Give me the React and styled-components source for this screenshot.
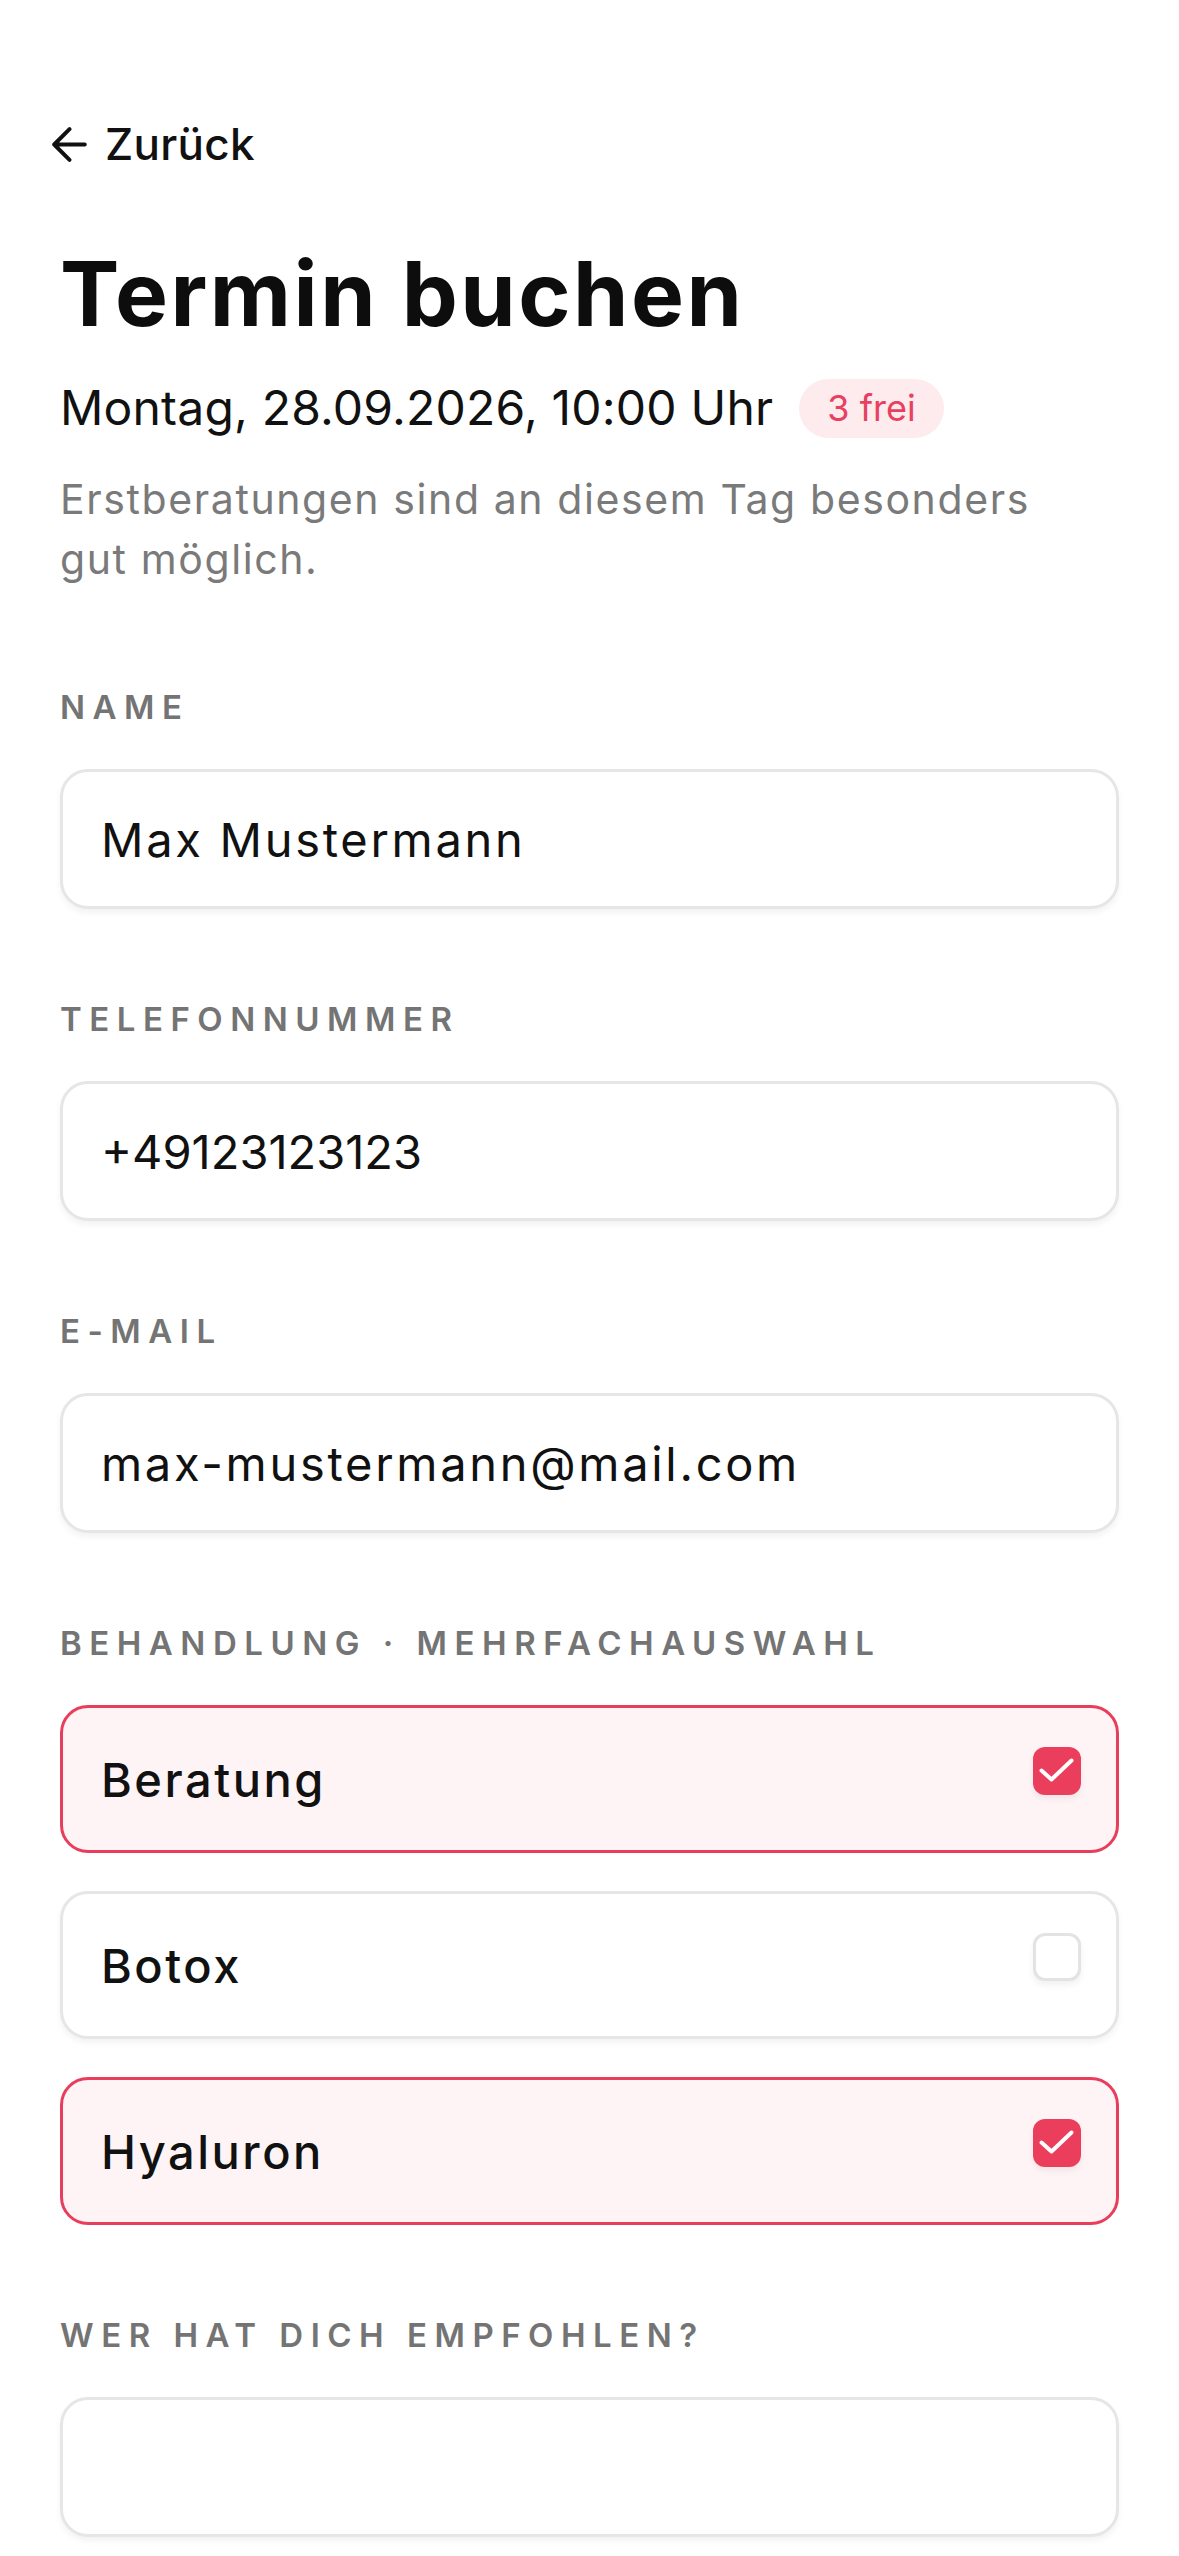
import { useState } from "react";
import styled, { createGlobalStyle } from "styled-components";

const GlobalStyle = createGlobalStyle`
  * {
    box-sizing: border-box;
  }
  body {
    margin: 0;
    background: #ffffff;
    font-family: Inter, "Noto Sans", sans-serif;
    color: #111111;
  }
`;

const treatments = ["Beratung", "Botox", "Hyaluron"];

export default function App() {
  const [selected, setSelected] = useState(["Beratung", "Hyaluron"]);

  function toggle(name) {
    setSelected((prev) =>
      prev.includes(name) ? prev.filter((n) => n !== name) : [...prev, name]
    );
  }

  return (
    <Page>
      <GlobalStyle />
      <BackLink href="#">
        <svg width="35" height="35" viewBox="4 4 16 16" fill="none">
          <path
            d="M12 19 5 12l7-7M19 12H5"
            stroke="#111"
            strokeWidth="1.8"
            strokeLinecap="round"
            strokeLinejoin="round"
          />
        </svg>
        Zurück
      </BackLink>

      <Title>Termin buchen</Title>
      <DateRow>
        <DateText>Montag, 28.09.2026, 10:00 Uhr</DateText>
        <Badge>3 frei</Badge>
      </DateRow>
      <Hint>Erstberatungen sind an diesem Tag besonders gut möglich.</Hint>

      <Form>
        <Field>
          <Label>Name</Label>
          <Input type="text" defaultValue="Max Mustermann" />
        </Field>
        <Field>
          <Label>Telefonnummer</Label>
          <Input type="tel" defaultValue="+49123123123" />
        </Field>
        <Field>
          <Label>E-Mail</Label>
          <Input type="email" defaultValue="max-mustermann@mail.com" />
        </Field>
        <Field>
          <Label>Behandlung · Mehrfachauswahl</Label>
          <Choices>
            {treatments.map((name) => {
              const active = selected.includes(name);
              return (
                <Choice key={name} $active={active} onClick={() => toggle(name)}>
                  <span>{name}</span>
                  <Check $active={active}>
                    {active && (
                      <svg width="48" height="48" viewBox="0 0 48 48" fill="none">
                        <path
                          d="M8.5 23.5 18.5 32.5 38.5 13.5"
                          stroke="#ffffff"
                          strokeWidth="4"
                          strokeLinecap="round"
                          strokeLinejoin="round"
                        />
                      </svg>
                    )}
                  </Check>
                </Choice>
              );
            })}
          </Choices>
        </Field>
        <Field>
          <Label>Wer hat dich empfohlen?</Label>
          <Input type="text" defaultValue="" />
        </Field>
      </Form>
    </Page>
  );
}

const Page = styled.main`
  width: 1179px;
  min-height: 2556px;
  padding: 117px 60px 0 60px;
`;

const BackLink = styled.a`
  display: flex;
  align-items: center;
  gap: 18px;
  height: 54px;
  font-size: 44px;
  line-height: 54px;
  font-weight: 500;
  letter-spacing: 0.3px;
  color: #111111;
  text-decoration: none;
  svg {
    margin-left: -8px;
  }
`;

const Title = styled.h1`
  margin: 74px 0 0 0;
  font-size: 89px;
  line-height: 98px;
  font-weight: 700;
  letter-spacing: 2.5px;
  color: #0d0d0d;
`;

const DateRow = styled.div`
  display: flex;
  align-items: center;
  gap: 26px;
  margin-top: 35px;
  height: 60px;
`;

const DateText = styled.span`
  font-size: 48px;
  line-height: 60px;
  font-weight: 400;
  letter-spacing: 0.2px;
  color: #111111;
`;

const Badge = styled.span`
  display: inline-flex;
  align-items: center;
  height: 59px;
  padding: 0 28px;
  border-radius: 30px;
  background: #fdebee;
  color: #e8405f;
  font-size: 36px;
  font-weight: 400;
`;

const Hint = styled.p`
  max-width: 1020px;
  margin: 31px 0 0 0;
  font-size: 41px;
  line-height: 60px;
  letter-spacing: 1.6px;
  color: #7a7a7a;
`;

const Form = styled.form`
  display: flex;
  flex-direction: column;
  gap: 90px;
  margin-top: 98px;
`;

const Field = styled.div`
  display: flex;
  flex-direction: column;
  gap: 42px;
`;

const Label = styled.label`
  font-size: 33px;
  line-height: 40px;
  font-weight: 600;
  letter-spacing: 7.5px;
  text-transform: uppercase;
  color: #747474;
`;

const Input = styled.input`
  width: 100%;
  height: 140px;
  padding: 0 38px;
  border: 3px solid #e6e6e6;
  border-radius: 28px;
  background: #ffffff;
  box-shadow: 0 4px 6px rgba(0, 0, 0, 0.05);
  font-family: inherit;
  font-size: 47px;
  letter-spacing: 2.7px;
  color: #111111;
  outline: none;
  &[type="tel"] {
    letter-spacing: 0;
    font-variant-numeric: proportional-nums;
  }
`;

const Choices = styled.div`
  display: flex;
  flex-direction: column;
  gap: 38px;
`;

const Choice = styled.div`
  display: flex;
  align-items: center;
  justify-content: space-between;
  height: 148px;
  padding: 0 35px 0 38px;
  border: 3px solid ${(p) => (p.$active ? "#e93d5c" : "#e6e6e6")};
  border-radius: 28px;
  background: ${(p) => (p.$active ? "#fef4f5" : "#ffffff")};
  box-shadow: ${(p) => (p.$active ? "none" : "0 4px 6px rgba(0, 0, 0, 0.05)")};
  font-size: 47px;
  font-weight: 500;
  letter-spacing: 2.5px;
  color: #111111;
  cursor: pointer;
`;

const Check = styled.span`
  display: flex;
  width: 48px;
  height: 48px;
  margin-bottom: 16px;
  border-radius: 12px;
  background: ${(p) => (p.$active ? "#eb3e5d" : "#ffffff")};
  border: ${(p) => (p.$active ? "none" : "3px solid #e3e3e3")};
  box-shadow: 0 4px 6px rgba(0, 0, 0, 0.06);
`;
